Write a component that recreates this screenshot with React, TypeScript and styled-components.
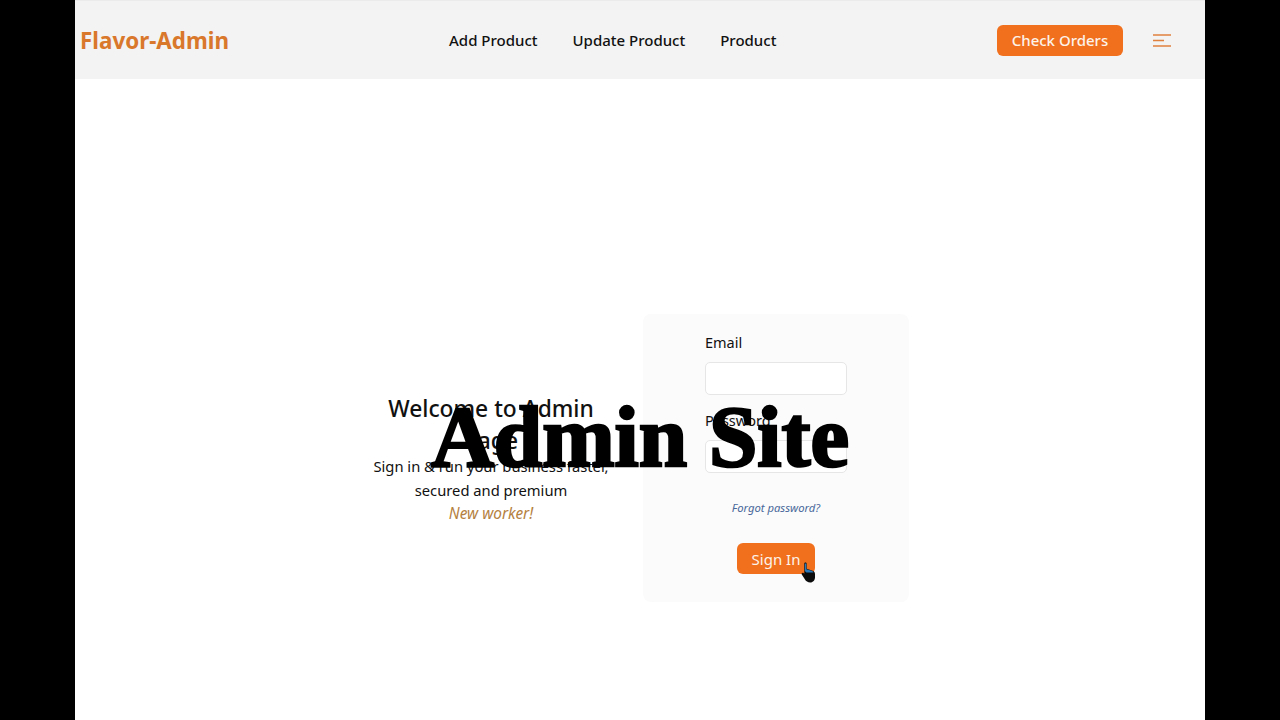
import styled, { createGlobalStyle } from 'styled-components'

const GlobalStyle = createGlobalStyle`
  html, body {
    margin: 0;
    height: 100%;
    background: #000;
    overflow: hidden;
  }
  body {
    font-family: "Noto Sans", "Open Sans", "Liberation Sans", sans-serif;
  }
`

const Frame = styled.div`
  position: relative;
  width: 1130px;
  height: 720px;
  margin: 0 auto;
  background: #fff;
  overflow: hidden;
`

const Navbar = styled.nav`
  display: flex;
  align-items: center;
  height: 79px;
  padding: 0 34px 0 5px;
  background: #f3f3f3;
  border-top: 1px solid #ebebeb;
  box-sizing: border-box;
`

const Logo = styled.a`
  width: 149px;
  font-size: 22.4px;
  font-weight: 700;
  white-space: nowrap;
  color: #d9772b;
`

const NavLinks = styled.ul`
  display: flex;
  gap: 35px;
  margin: 0 0 0 220px;
  padding: 0;
  list-style: none;
`

const NavLink = styled.li`
  font-size: 15px;
  font-weight: 500;
  color: #111;
`

const NavEnd = styled.div`
  display: flex;
  justify-content: flex-end;
  align-items: center;
  gap: 30px;
  margin-left: auto;
`

const OrangeButton = styled.button<{ $wide?: boolean }>`
  position: relative;
  height: 31px;
  padding: 0;
  width: ${(p) => (p.$wide ? '126px' : '78px')};
  border: none;
  border-radius: 6px;
  background: #f0701e;
  color: #fdf3ea;
  font-family: inherit;
  font-size: 15px;
  font-weight: ${(p) => (p.$wide ? 500 : 400)};
`

const Main = styled.main`
  display: flex;
  justify-content: center;
  align-items: center;
  gap: 33px;
  padding: 235px 0 0 1px;
`

const Intro = styled.section`
  width: 238px;
  margin-top: 2px;
  text-align: center;
  color: #111;
`

const Heading = styled.h1`
  margin: 1px 0 -2px;
  padding: 0 12px;
  font-size: 22.8px;
  font-weight: 500;
  line-height: 32px;
`

const IntroText = styled.p`
  margin: 0;
  font-size: 14.75px;
  line-height: 23.5px;
`

const NewWorker = styled.a`
  display: block;
  font-size: 15.4px;
  line-height: 23.5px;
  font-style: italic;
  color: #b5813f;
`

const Card = styled.form`
  display: flex;
  flex-direction: column;
  align-items: center;
  width: 266px;
  height: 288px;
  padding-top: 17px;
  border-radius: 8px;
  background: #fbfbfb;
  box-sizing: border-box;
`

const Field = styled.div`
  display: flex;
  flex-direction: column;
  width: 142px;
  margin-bottom: 14px;
`

const Label = styled.label`
  font-size: 14.5px;
  line-height: 22px;
  margin-bottom: 9px;
  color: #111;
`

const Input = styled.input`
  height: 33px;
  border: 1px solid #e6e6e6;
  border-radius: 5px;
  background: #fff;
  box-sizing: border-box;
`

const Forgot = styled.a`
  margin: 13px 0 27px;
  font-size: 11.25px;
  line-height: 16px;
  font-style: italic;
  color: #48689a;
`

const Cursor = styled.svg`
  position: absolute;
  right: -1px;
  bottom: -9px;
  width: 15px;
  height: 21px;
`

const Overlay = styled.div`
  position: absolute;
  left: 0;
  right: 0;
  top: 387px;
  text-align: center;
  font-family: "Liberation Serif", "DejaVu Serif", serif;
  font-size: 87px;
  font-weight: 700;
  line-height: 100px;
  color: #000;
  -webkit-text-stroke: 2.6px #000;
`

const App = () => {
  return (
    <>
      <GlobalStyle />
      <Frame>
        <Navbar>
          <Logo>Flavor-Admin</Logo>
          <NavLinks>
            <NavLink>Add Product</NavLink>
            <NavLink>Update Product</NavLink>
            <NavLink>Product</NavLink>
          </NavLinks>
          <NavEnd>
            <OrangeButton $wide>Check Orders</OrangeButton>
            <svg width="18" height="13" viewBox="0 0 18 13" fill="none" stroke="#e0813f" strokeWidth="1.5">
              <path d="M0 1h18M0 6.500h11M0 12h18" />
            </svg>
          </NavEnd>
        </Navbar>

        <Main>
          <Intro>
            <Heading>Welcome to Admin Page</Heading>
            <IntroText>Sign in &amp; run your business faster, secured and premium</IntroText>
            <NewWorker>New worker!</NewWorker>
          </Intro>

          <Card>
            <Field>
              <Label>Email</Label>
              <Input type="email" />
            </Field>
            <Field>
              <Label>Password</Label>
              <Input type="password" />
            </Field>
            <Forgot>Forgot password?</Forgot>
            <OrangeButton type="button">
              Sign In
              <Cursor viewBox="0 0 14 20">
                <path
                  d="M3 1.500c0-1.300 2.200-1.300 2.200 0v5l5 1.500c2 .7 3 1.500 3 3.500v3c0 2.800-1.800 5-4.500 5-2.500 0-4-1-5.200-3L.6 12c-.7-1.300.8-2.300 1.900-1.300l.5.600z"
                  fill="#0b0b0b"
                />
                <path d="M3.500 1.500h1.400v5.300l5 1.500c1 .4 1.600.8 1.800 1.700H5L3.500 8.500z" fill="#2a78b8" />
              </Cursor>
            </OrangeButton>
          </Card>
        </Main>

        <Overlay>Admin Site</Overlay>
      </Frame>
    </>
  )
}

export default App
